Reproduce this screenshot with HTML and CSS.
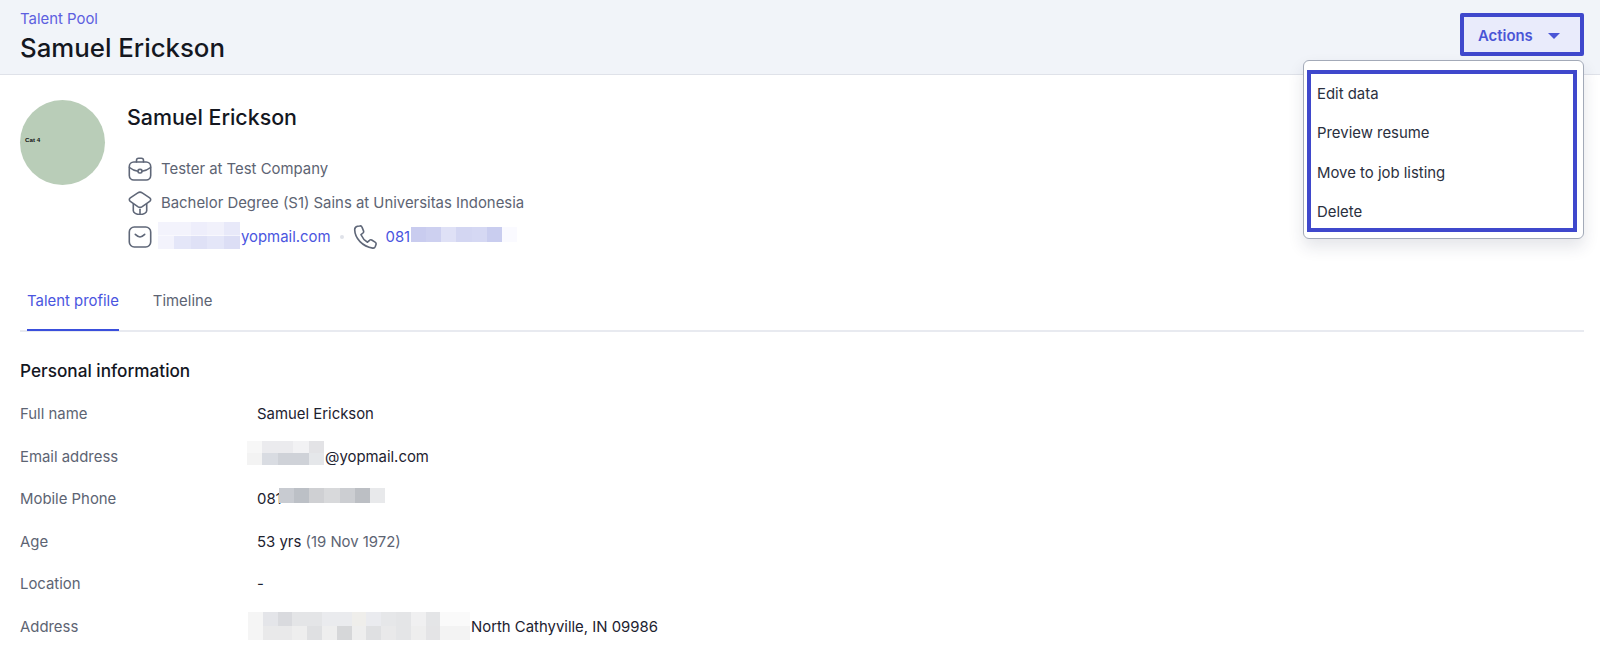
FILE: index.html
```html
<!DOCTYPE html>
<html lang="en">
<head>
<meta charset="utf-8">
<title>Samuel Erickson</title>
<link rel="stylesheet" href="styles.css">
</head>
<body>
<header class="topbar">
  <div class="heading">
    <a class="crumb">Talent Pool</a>
    <h1 class="title">Samuel Erickson</h1>
  </div>
  <div class="actions">
    <button class="actions-btn">Actions <span class="caret"></span></button>
    <div class="menu">
      <ul class="menu-list">
        <li>Edit data</li>
        <li>Preview resume</li>
        <li>Move to job listing</li>
        <li>Delete</li>
      </ul>
    </div>
  </div>
</header>
<main class="page">
  <section class="profile">
    <div class="avatar"><span class="avatar-text">Cat 4</span></div>
    <div class="details">
      <h2 class="name">Samuel Erickson</h2>
      <div class="detail-row">
        <svg class="icon" viewBox="0 0 24 24"><path d="M8.500 5V3.500C8.500 2.200 9.300 1.300 10.600 1.300h2.800c1.300 0 2.100.9 2.100 2.200V5"/><rect x="1.300" y="5" width="21.400" height="18" rx="4.500"/><path d="M1.500 10.500c3 2.500 6 3.500 8.500 3.700M22.500 10.500c-3 2.500-6 3.500-8.500 3.700"/><rect x="10" y="12.400" width="4" height="3.600" rx="1.600"/></svg>
        <span>Tester at Test Company</span>
      </div>
      <div class="detail-row">
        <svg class="icon" viewBox="0 0 24 24"><path d="M9.800 1.800c1.400-.9 3-.9 4.400 0l7.500 5c1.300.9 1.300 2.700 0 3.600l-7.500 5.200c-1.400.9-3 .9-4.400 0l-7.500-5.200c-1.300-.9-1.300-2.700 0-3.600z"/><path d="M5.300 13v6.800c0 2 3 3.700 6.700 3.700s6.700-1.700 6.700-3.700V13"/><path d="M12 23.300v-5"/></svg>
        <span>Bachelor Degree (S1) Sains at Universitas Indonesia</span>
      </div>
      <div class="detail-row">
        <svg class="icon" viewBox="0 0 24 24"><rect x="1.300" y="2" width="21.400" height="20" rx="5"/><path d="M7.300 9.300c2 1.900 3.400 2.700 4.700 2.700s2.700-.8 4.700-2.700"/></svg>
        <span class="mask mask-head-email"></span>
        <a class="link">yopmail.com</a>
        <span class="dot"></span>
        <svg class="icon" viewBox="0 0 24 24"><path d="M4.500 1.300 6.800.9c1-.2 1.900.3 2.200 1.200l1.500 3.800c.3.800.1 1.600-.5 2.100L8 9.700c1.400 3.200 3.500 5.700 6.500 7.500l2-1.900c.6-.6 1.500-.7 2.200-.3l3.400 2.100c.8.500 1.200 1.400.9 2.300l-.7 2.100c-.4 1.100-1.500 1.800-2.600 1.600C9.500 21.400 2 13.500 1.700 4.900c-.1-1.700 1.200-3.200 2.800-3.600z"/></svg>
        <a class="link">081</a>
        <span class="mask mask-head-phone"></span>
      </div>
    </div>
  </section>

  <nav class="tabs">
    <a class="tab tab-active">Talent profile</a>
    <a class="tab">Timeline</a>
  </nav>

  <section class="info">
    <h3 class="info-title">Personal information</h3>
    <dl class="info-list">
      <div class="info-row"><dt>Full name</dt><dd>Samuel Erickson</dd></div>
      <div class="info-row"><dt>Email address</dt><dd><span class="mask mask-email"></span>@yopmail.com</dd></div>
      <div class="info-row"><dt>Mobile Phone</dt><dd>081<span class="mask mask-phone"></span></dd></div>
      <div class="info-row"><dt>Age</dt><dd>53 yrs&nbsp;<span class="muted">(19 Nov 1972)</span></dd></div>
      <div class="info-row"><dt>Location</dt><dd>-</dd></div>
      <div class="info-row"><dt>Address</dt><dd><span class="mask mask-address"></span>North Cathyville, IN 09986</dd></div>
    </dl>
  </section>
</main>
</body>
</html>
```
FILE: styles.css
```css
* { box-sizing: border-box; }
html, body { margin: 0; height: 100%; }
body {
  height: 648px;
  overflow: hidden;
  background: #fff;
  color: #1d2230;
  font-family: Inter, "Liberation Sans", sans-serif;
  font-size: 14.9px;
  line-height: 20px;
}
h1, h2, h3, dl, dd, ul { margin: 0; padding: 0; }

.topbar {
  height: 75px;
  display: flex;
  justify-content: space-between;
  padding: 9px 16px 0 20px;
  background: #f1f4f9;
  border-bottom: 1px solid #dfe2e9;
}
.crumb { display: block; color: #5d5fe0; }
.title {
  margin-top: 3px;
  font-size: 25.8px;
  line-height: 32px;
  font-weight: 550;
  color: #14171f;
}

.actions { position: relative; margin-top: 4px; }
.actions-btn {
  display: flex;
  align-items: center;
  width: 124px;
  height: 43px;
  padding: 2px 0 0 14px;
  background: #e9ebfb;
  border: 4px solid #3f48cc;
  border-radius: 2px;
  color: #4a55d6;
  font: 600 14.9px/20px Inter, "Liberation Sans", sans-serif;
}
.caret {
  margin: 0 0 0 15px;
  border-left: 6.500px solid transparent;
  border-right: 6.500px solid transparent;
  border-top: 6.500px solid #4a55d6;
}
.menu {
  position: absolute;
  z-index: 5;
  top: 47px;
  right: 0;
  width: 281px;
  height: 179px;
  padding: 9px 6px 6px 3px;
  background: #fff;
  border: 1px solid #a3aab8;
  border-radius: 6px;
  box-shadow: 0 8px 16px rgba(30, 40, 70, .12);
}
.menu-list {
  display: flex;
  flex-direction: column;
  gap: 15.300px;
  height: 162px;
  padding: 8px 0 0 6px;
  list-style: none;
  border: 4px solid #3f48cc;
  color: #2b3040;
}
.menu-list li { line-height: 24px; }

.page { padding: 25px 16px 0 20px; }
.profile { display: flex; gap: 22px; height: 179px; }
.avatar {
  display: flex;
  align-items: center;
  width: 85px;
  height: 85px;
  padding: 0 0 6px 5px;
  border-radius: 50%;
  background: #b9cdb8;
}
.avatar-text {
  font: 700 6.200px/8px "Liberation Sans", sans-serif;
  color: #111;
}
.name {
  margin: 3px 0 20.400px;
  font-size: 21.400px;
  line-height: 28px;
  font-weight: 550;
  color: #14171f;
}
.detail-row {
  display: flex;
  align-items: center;
  gap: 9px;
  height: 34.400px;
  margin-left: 1px;
  color: #5d6473;
}
.icon {
  flex: none;
  width: 24px;
  height: 24px;
  fill: none;
  stroke: #5f6778;
  stroke-width: 1.600;
  stroke-linecap: round;
  stroke-linejoin: round;
}
.link { color: #4a55e0; }
.dot {
  flex: none;
  width: 4px;
  height: 4px;
  border-radius: 50%;
  background: #dfe2e9;
}

.mask { flex: none; display: block; background-repeat: no-repeat; }
.mask-head-email {
  width: 82px;
  height: 27px;
  margin: -3px -8px 0 -3px;
  background-size: 100% 50%;
  background-position: top, bottom;
  background-image:
    linear-gradient(90deg, #f3f3fc 0 40%, #eeeefb 40% 60%, #f1f1fb 60% 80%, #e8e9f9 80%),
    linear-gradient(90deg, #f3f3fc 0 20%, #e4e6f8 20% 40%, #dfe1f6 40% 60%, #e4e6f8 60% 80%, #dcdef5 80%);
}
.mask-head-phone {
  width: 106px;
  height: 15px;
  margin: -5px 0 0 -8px;
  background-image: linear-gradient(90deg, #c9ccef 0 14.300%, #cdd0f0 14.300% 28.600%, #dfe1f6 28.600% 42.900%, #d3d6f2 42.900% 57.200%, #d5d8f3 57.200% 71.500%, #c9cdef 71.500% 85.800%, #fafaff 85.800%);
}

.tabs {
  display: flex;
  gap: 34px;
  padding-left: 7px;
  border-bottom: 2px solid #e8eaf0;
  margin-top: 12px;
}
.tab {
  padding-bottom: 18px;
  color: #5d6473;
}
.tab-active {
  margin-bottom: -1px;
  border-bottom: 2px solid #3a4fdc;
  color: #4a55e0;
}

.info-title {
  margin-top: 27px;
  font-size: 17.200px;
  line-height: 24px;
  font-weight: 550;
  color: #14171f;
}
.info-list { margin-top: 9.750px; }
.info-row {
  display: flex;
  align-items: center;
  height: 42.500px;
}
.info-row dt { width: 237px; color: #5d6473; }
.info-row dd { display: flex; align-items: center; color: #1d2230; }
.muted { color: #5d6473; }

.mask-email {
  width: 77px;
  height: 24px;
  margin: -8px 1px 0 -10px;
  background-size: 100% 50%;
  background-position: top, bottom;
  background-image:
    linear-gradient(90deg, #f7f7f7 0 20%, #ebebee 20% 60%, #f2f2f4 60% 80%, #e3e3e6 80%),
    linear-gradient(90deg, #f3f3f3 0 20%, #d9dce2 20% 40%, #cfd2d8 40% 80%, #e5e7ea 80%);
}
.mask-phone {
  width: 106px;
  height: 15px;
  margin: -7px 0 0 -3px;
  background-image: linear-gradient(90deg, #c8cbd1 0 14.300%, #bcc0c6 14.300% 28.600%, #cfd0d3 28.600% 42.900%, #d8d9db 42.900% 57.200%, #ccced2 57.200% 71.500%, #bcbfc4 71.500% 85.800%, #e8e9eb 85.800%);
}
.mask-address {
  width: 222px;
  height: 28px;
  margin: -2px 1px 0 -9px;
  background-size: 100% 50%;
  background-position: top, bottom;
  background-image:
    linear-gradient(90deg, #f5f5f5 0 6.700%, #e4e5e9 6.700% 13.300%, #d9dade 13.300% 20%, #e4e5e7 20% 33.300%, #eaebee 33.300% 46.700%, #efeeeb 46.700% 53.300%, #eaebef 53.300% 60%, #e6e7e9 60% 66.700%, #e4e5e7 66.700% 73.300%, #f0f0f1 73.300% 80%, #e4e5e7 80% 86.700%, #fafafa 86.700%),
    linear-gradient(90deg, #f5f5f5 0 6.700%, #e9e9ea 6.700% 20%, #eeeeee 20% 26.700%, #dfe0e2 26.700% 33.300%, #eeeeee 33.300% 40%, #d6d7d9 40% 46.700%, #eeeeee 46.700% 53.300%, #dfe0e2 53.300% 60%, #e9e9ea 60% 66.700%, #e4e5e7 66.700% 73.300%, #eeeeee 73.300% 80%, #e4e4e6 80% 86.700%, #f3f3f3 86.700%);
}
```
